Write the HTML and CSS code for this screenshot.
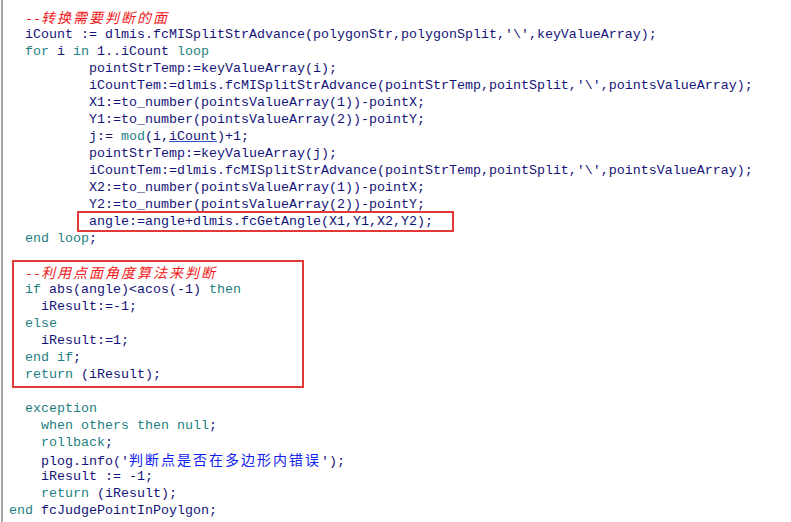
FILE: index.html
```html
<!DOCTYPE html>
<html lang="zh-CN">
<head>
  <meta charset="UTF-8">
  <title>fcJudgePointInPoylgon</title>
  <link rel="stylesheet" href="styles.css">
</head>
<body>

  <!-- Code editor view -->
  <div class="editor">
    <div class="code">
      <div class="line">  <span class="cm">--<span class="cjk">转换需要判断的面</span></span></div>
      <div class="line">  iCount := dlmis.fcMISplitStrAdvance(polygonStr,polygonSplit,'\',keyValueArray);</div>
      <div class="line">  <span class="kw">for</span> i <span class="kw">in</span> 1..iCount <span class="kw">loop</span></div>
      <div class="line">          pointStrTemp:=keyValueArray(i);</div>
      <div class="line">          iCountTem:=dlmis.fcMISplitStrAdvance(pointStrTemp,pointSplit,'\',pointsValueArray);</div>
      <div class="line">          X1:=to_number(pointsValueArray(1))-pointX;</div>
      <div class="line">          Y1:=to_number(pointsValueArray(2))-pointY;</div>
      <div class="line">          j:= <span class="kw">mod</span>(i,<span class="flag">iCount</span>)+1;</div>
      <div class="line">          pointStrTemp:=keyValueArray(j);</div>
      <div class="line">          iCountTem:=dlmis.fcMISplitStrAdvance(pointStrTemp,pointSplit,'\',pointsValueArray);</div>
      <div class="line">          X2:=to_number(pointsValueArray(1))-pointX;</div>
      <div class="line">          Y2:=to_number(pointsValueArray(2))-pointY;</div>
      <div class="line mark-line">angle:=angle+dlmis.fcGetAngle(X1,Y1,X2,Y2);</div>
      <div class="line">  <span class="kw">end loop</span>;</div>
      <div class="line"> </div>

      <!-- highlighted block -->
      <div class="mark-block">
        <div class="line"><span class="cm">--<span class="cjk">利用点面角度算法来判断</span></span></div>
        <div class="line"><span class="kw">if</span> abs(angle)&lt;acos(-1) <span class="kw">then</span></div>
        <div class="line">  iResult:=-1;</div>
        <div class="line"><span class="kw">else</span></div>
        <div class="line">  iResult:=1;</div>
        <div class="line"><span class="kw">end if</span>;</div>
        <div class="line"><span class="kw">return</span> (iResult);</div>
      </div>

      <div class="line"> </div>
      <div class="line">  <span class="kw">exception</span></div>
      <div class="line">    <span class="kw">when others then null</span>;</div>
      <div class="line">    <span class="kw">rollback</span>;</div>
      <div class="line">    plog.info('<span class="str cjk">判断点是否在多边形内错误</span>');</div>
      <div class="line">    iResult := -1;</div>
      <div class="line">    <span class="kw">return</span> (iResult);</div>
      <div class="line"><span class="kw">end</span> fcJudgePointInPoylgon;</div>
    </div>
  </div>

</body>
</html>
```

FILE: styles.css
```css
/* Reset & base */
* { margin: 0; padding: 0; box-sizing: border-box; }
body { background: #fff; font-family: "Liberation Mono", "Noto Sans CJK SC", monospace; font-size: 13.33px; color: #141478; }

/* Editor frame */
.editor { height: 522px; margin-left: 1px; border-left: 2px solid #a6a6a6; overflow: hidden; }
.code { padding: 9px 0 0 6px; }
.line { height: 17px; line-height: 17px; white-space: pre; }

/* Syntax colours */
.kw { color: #1d7f82; }
.cm { color: #f01818; font-style: italic; }
.str { color: #1020ee; }
.cjk { font-family: "Noto Sans CJK SC", sans-serif; font-size: 14px; letter-spacing: 2px; }
.flag { text-decoration: underline; text-decoration-color: #3050c0; }

/* Red annotation frames */
.mark-line {
  width: 373px;
  margin-left: 70px;
  padding-left: 10px;
  outline: 2px solid #e23838;
}
.mark-block {
  width: 288px;
  margin: -2px 0 -3px 5px;
  padding: 2px 0 3px 11px;
  outline: 2px solid #e23838;
}
```
